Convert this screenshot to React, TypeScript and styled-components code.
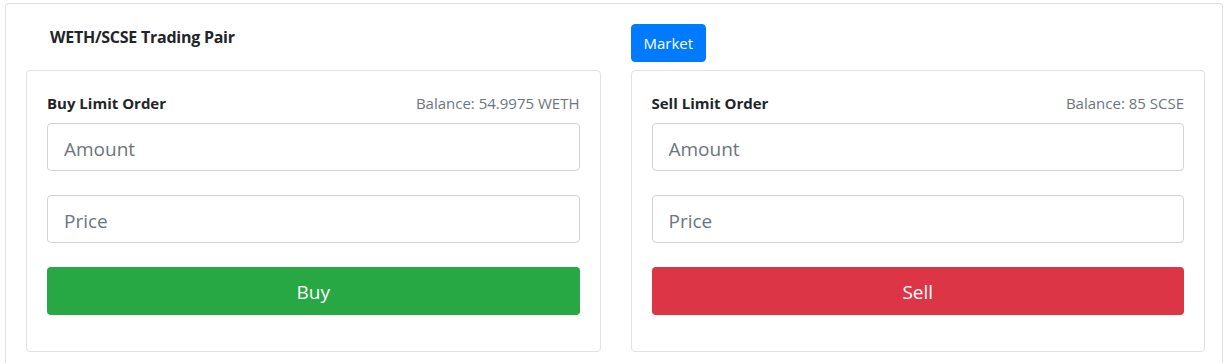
import styled, { createGlobalStyle } from 'styled-components';

const GlobalStyle = createGlobalStyle`
  body {
    margin: 0;
    background: #fff;
    font-family: "Open Sans", "Noto Sans", sans-serif;
    color: #212529;
  }
  * { box-sizing: border-box; }
`;

const Wrapper = styled.div`
  padding: 3px 2px 0 5px;
`;

const OuterCard = styled.div`
  border: 1px solid #dee2e6;
  border-bottom: none;
  border-radius: 4px 4px 0 0;
  padding: 0 2px 20px 5px;
  height: 370px;
`;

const Row = styled.div`
  display: flex;
`;

const Col = styled.div`
  flex: 1;
  padding: 0 15px;
  display: flex;
  flex-direction: column;
`;

const TopBar = styled.div`
  height: 66px;
  display: flex;
  align-items: flex-start;
`;

const PairTitle = styled.div`
  font-size: 16px;
  font-weight: 700;
  padding: 22px 0 0 24px;
  letter-spacing: -0.25px;
`;

const MarketButton = styled.button`
  margin-top: 20px;
  background: #007bff;
  color: #fff;
  border: 1px solid #007bff;
  border-radius: 4px;
  font-family: inherit;
  font-size: 15px;
  height: 38px;
  padding: 0 12px;
`;

const Card = styled.div`
  border: 1px solid #dee2e6;
  border-radius: 4px;
  padding: 20px 20px 36px;
  display: flex;
  flex-direction: column;
`;

const CardHeader = styled.div`
  display: flex;
  justify-content: space-between;
  align-items: center;
  height: 24px;
  margin-bottom: 8px;
`;

const OrderTitle = styled.div`
  font-size: 15px;
  font-weight: 700;
`;

const Balance = styled.div`
  font-size: 15px;
  color: #6c757d;
`;

const Input = styled.input`
  height: 48px;
  width: 100%;
  border: 1px solid #ced4da;
  border-radius: 4px;
  padding: 3px 16px 0;
  font-family: inherit;
  font-size: 19px;
  margin-bottom: 24px;
  color: #495057;
  &::placeholder { color: #6c757d; }
`;

const ActionButton = styled.button<{ $bg: string }>`
  height: 48px;
  width: 100%;
  border: none;
  border-radius: 4px;
  padding-top: 3px;
  background: ${p => p.$bg};
  color: #fff;
  font-family: inherit;
  font-size: 19px;
`;

type Side = {
  title: string;
  balance: string;
  action: string;
  color: string;
};

const OrderCard = ({ side }: { side: Side }) => (
  <Card>
    <CardHeader>
      <OrderTitle>{side.title}</OrderTitle>
      <Balance>{side.balance}</Balance>
    </CardHeader>
    <Input placeholder="Amount" />
    <Input placeholder="Price" />
    <ActionButton $bg={side.color}>{side.action}</ActionButton>
  </Card>
);

const App = () => {
  return (
    <Wrapper>
      <GlobalStyle />
      <OuterCard>
        <Row>
          <Col>
            <TopBar>
              <PairTitle>WETH/SCSE Trading Pair</PairTitle>
            </TopBar>
            <OrderCard side={{ title: 'Buy Limit Order', balance: 'Balance: 54.9975 WETH', action: 'Buy', color: '#28a745' }} />
          </Col>
          <Col>
            <TopBar>
              <MarketButton>Market</MarketButton>
            </TopBar>
            <OrderCard side={{ title: 'Sell Limit Order', balance: 'Balance: 85 SCSE', action: 'Sell', color: '#dc3545' }} />
          </Col>
        </Row>
      </OuterCard>
    </Wrapper>
  );
};

export default App;
